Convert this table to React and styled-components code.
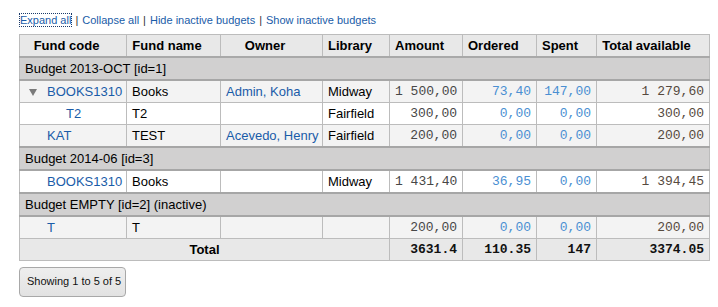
import React from "react";
import styled, { createGlobalStyle } from "styled-components";

const Global = createGlobalStyle`
  html, body { margin: 0; padding: 0; background: #fff; }
  body { font-family: "Liberation Sans", Arial, sans-serif; color: #000; }
`;

const Page = styled.div`
  padding: 13px 9px 0 19px;
  width: 690px;
`;

const Links = styled.div`
  font-size: 11px;
  line-height: 14px;
  color: #333;
  margin-bottom: 7px;
  padding-left: 1px;
`;

const Link = styled.a`
  color: #1a5ca8;
  text-decoration: none;
  outline: ${(p) => (p.$focus ? "1px dotted #1a3a6a" : "none")};
  outline-offset: 0px;
`;

const Sep = styled.span`
  color: #333;
  margin: 0 4px;
`;

const Table = styled.table`
  width: 690px;
  border-collapse: collapse;
  table-layout: fixed;
  border: 1px solid #bcbcbc;
  font-size: 13px;
`;

const Th = styled.th`
  background: #e8e8e8;
  font-weight: bold;
  text-align: center;
  padding: 3px 18px 3px 5px;
  line-height: 15px;
  border: 1px solid #bcbcbc;
  border-bottom: 2px solid #a9a9a9;
  white-space: nowrap;
`;

const GroupCell = styled.td`
  background: #d1d0d0;
  padding: 3px 5px;
  line-height: 15px;
  border-top: 2px solid #a6a6a6;
  border-bottom: 2px solid #a6a6a6;
  border-left: 1px solid #bcbcbc;
  border-right: 1px solid #bcbcbc;
`;

const Tr = styled.tr`
  background: ${(p) => (p.$odd ? "#f3f3f3" : "#ffffff")};
`;

const Td = styled.td`
  padding: 3px 5px;
  line-height: 15px;
  height: 15px;
  border: 1px solid #bcbcbc;
  white-space: nowrap;
  overflow: hidden;
`;

const Num = styled(Td)`
  text-align: right;
  font-family: "Liberation Mono", "Courier New", monospace;
  font-size: 13px;
  color: ${(p) => p.$color};
`;

const Indent = styled.span`
  display: inline-block;
  width: ${(p) => p.$w}px;
`;

const Expander = styled.span`
  display: inline-block;
  width: 22px;
  padding-left: 4px;
  box-sizing: border-box;
  svg {
    display: inline-block;
    vertical-align: 0px;
  }
`;

const CellLink = styled.a`
  color: #1a5ca8;
  text-decoration: none;
`;

const TotalRow = styled.tr`
  background: #e8e8e8;
`;

const TotalLabel = styled.td`
  text-align: center;
  font-weight: bold;
  padding: 3px 5px;
  line-height: 15px;
  border: 1px solid #bcbcbc;
`;

const TotalNum = styled(Td)`
  text-align: right;
  font-weight: bold;
  font-family: "Liberation Mono", "Courier New", monospace;
  color: #111;
`;

const InfoButton = styled.div`
  display: inline-block;
  margin-top: 6px;
  font-size: 11px;
  line-height: 13px;
  padding: 7px 7px 8px;
  border: 1px solid #a8a8a8;
  border-radius: 4px;
  background: linear-gradient(#eeeeee, #e2e2e2);
  color: #111;
  width: 91px;
  white-space: nowrap;
`;

const Triangle = () => (
  <svg width="8" height="7" viewBox="0 0 8 7">
    <polygon points="0,0 8,0 4,7" fill="#7a7a7a" />
  </svg>
);

const AMT = "#474747";
const BLUE = "#4a8fd2";
const AVAIL = "#564a3e";

const cols = [107, 94, 102, 67, 73, 74, 60, 113];

const Row = ({ odd, level, expander, code, name, owner, library, amount, ordered, spent, avail }) => (
  <Tr $odd={odd}>
    <Td>
      {level === 2 && <Indent $w={19} />}
      <Expander>{expander ? <Triangle /> : null}</Expander>
      <CellLink href="#">{code}</CellLink>
    </Td>
    <Td>{name}</Td>
    <Td>{owner ? <CellLink href="#">{owner}</CellLink> : null}</Td>
    <Td>{library}</Td>
    <Num $color={AMT}>{amount}</Num>
    <Num $color={BLUE}>{ordered}</Num>
    <Num $color={BLUE}>{spent}</Num>
    <Num $color={AVAIL}>{avail}</Num>
  </Tr>
);

const Group = ({ children }) => (
  <tr>
    <GroupCell colSpan={8}>{children}</GroupCell>
  </tr>
);

export default function App() {
  return (
    <>
      <Global />
      <Page>
        <Links>
          <Link href="#" $focus>Expand all</Link>
          <Sep>|</Sep>
          <Link href="#">Collapse all</Link>
          <Sep>|</Sep>
          <Link href="#">Hide inactive budgets</Link>
          <Sep>|</Sep>
          <Link href="#">Show inactive budgets</Link>
        </Links>
        <Table>
          <colgroup>
            {cols.map((w, i) => (
              <col key={i} style={{ width: w }} />
            ))}
          </colgroup>
          <thead>
            <tr>
              <Th>Fund code</Th>
              <Th>Fund name</Th>
              <Th>Owner</Th>
              <Th>Library</Th>
              <Th>Amount</Th>
              <Th>Ordered</Th>
              <Th>Spent</Th>
              <Th>Total available</Th>
            </tr>
          </thead>
          <tbody>
            <Group>Budget 2013-OCT [id=1]</Group>
            <Row odd level={1} expander code="BOOKS1310" name="Books" owner="Admin, Koha" library="Midway" amount="1 500,00" ordered="73,40" spent="147,00" avail="1 279,60" />
            <Row level={2} code="T2" name="T2" library="Fairfield" amount="300,00" ordered="0,00" spent="0,00" avail="300,00" />
            <Row odd level={1} code="KAT" name="TEST" owner="Acevedo, Henry" library="Fairfield" amount="200,00" ordered="0,00" spent="0,00" avail="200,00" />
            <Group>Budget 2014-06 [id=3]</Group>
            <Row level={1} code="BOOKS1310" name="Books" library="Midway" amount="1 431,40" ordered="36,95" spent="0,00" avail="1 394,45" />
            <Group>Budget EMPTY [id=2] (inactive)</Group>
            <Row odd level={1} code="T" name="T" amount="200,00" ordered="0,00" spent="0,00" avail="200,00" />
            <TotalRow>
              <TotalLabel colSpan={4}>Total</TotalLabel>
              <TotalNum>3631.4</TotalNum>
              <TotalNum>110.35</TotalNum>
              <TotalNum>147</TotalNum>
              <TotalNum>3374.05</TotalNum>
            </TotalRow>
          </tbody>
        </Table>
        <InfoButton>Showing 1 to 5 of 5</InfoButton>
      </Page>
    </>
  );
}
